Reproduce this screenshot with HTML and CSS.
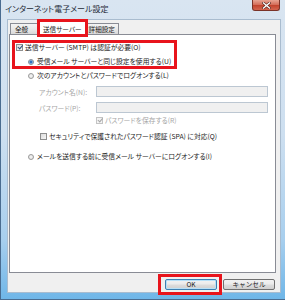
FILE: index.html
```html
<!DOCTYPE html>
<html lang="ja">

<head>
    <meta charset="utf-8">
    <link rel="stylesheet" href="styles.css">
</head>

<body>
    <div class="window">
        <div class="titlebar">
            <span class="title">インターネット電子メール設定</span>
            <div class="close-btn">
                <svg width="9" height="7" viewBox="0 0 9 7">
                    <path d="M1.5 1 L7.5 6 M7.5 1 L1.5 6" stroke="#5a2a22" stroke-width="2.6" stroke-linecap="square" />
                    <path d="M1.5 1 L7.5 6 M7.5 1 L1.5 6" stroke="#ffffff" stroke-width="1.4" stroke-linecap="square" />
                </svg>
            </div>
        </div>

        <div class="client">
            <div class="tabs">
                <div class="tab tab-first">全般</div>
                <div class="tab active">送信サーバー</div>
                <div class="tab">詳細設定</div>
            </div>

            <div class="panel">
                <div class="auth-group">
                    <div class="row row-auth">
                        <span class="checkbox checked"></span>
                        <span>送信サーバー (SMTP) は認証が必要(O)</span>
                    </div>
                    <div class="row row-same">
                        <span class="radio selected"></span>
                        <span>受信メール サーバーと同じ設定を使用する(U)</span>
                    </div>
                </div>
                <div class="row row-logon">
                    <span class="radio"></span>
                    <span>次のアカウントとパスワードでログオンする(L)</span>
                </div>
                <div class="field-row">
                    <span class="field-label">アカウント名(N):</span>
                    <div class="input"></div>
                </div>
                <div class="field-row field-row-second">
                    <span class="field-label">パスワード(P):</span>
                    <div class="input"></div>
                </div>
                <div class="row row-save disabled">
                    <span class="checkbox checked"></span>
                    <span>パスワードを保存する(R)</span>
                </div>
                <div class="row row-spa">
                    <span class="checkbox"></span>
                    <span>セキュリティで保護されたパスワード認証 (SPA) に対応(Q)</span>
                </div>
                <div class="row row-pop">
                    <span class="radio"></span>
                    <span>メールを送信する前に受信メール サーバーにログオンする(I)</span>
                </div>
            </div>

            <div class="buttons">
                <button class="btn btn-default">OK</button>
                <button class="btn">キャンセル</button>
            </div>
        </div>
    </div>
</body>

</html>
```

FILE: styles.css
```css
html,
body {
    margin: 0;
    padding: 0;
}

body {
    width: 285px;
    height: 300px;
    overflow: hidden;
    font-family: "Noto Sans CJK JP", "Noto Sans", sans-serif;
    font-feature-settings: "palt";
    color: #1c1c1c;
}

.window {
    box-sizing: border-box;
    width: 285px;
    height: 300px;
    padding: 0 4px 6px 6px;
    border-left: 1px solid #4a6c90;
    border-bottom: 1px solid #4a6c90;
    background: linear-gradient(180deg, #d9e5f1 0%, #cddff0 45%, #a8cfee 80%, #6fb6e8 100%);
}

.titlebar {
    display: flex;
    align-items: flex-start;
    height: 19px;
    margin: 0 -4px 0 -6px;
    padding-left: 4px;
}

.title {
    margin-top: 4px;
    font-size: 8px;
    line-height: 10px;
    color: #1e2a36;
}

.close-btn {
    box-sizing: border-box;
    display: flex;
    align-items: center;
    justify-content: center;
    width: 28px;
    height: 11px;
    margin-left: auto;
    margin-right: 5px;
    border: 1px solid #7a3328;
    border-top: none;
    border-radius: 0 0 3px 3px;
    background: linear-gradient(180deg, #e8a493 0%, #d5705c 45%, #c2452f 55%, #d4654f 100%);
}

.client {
    box-sizing: border-box;
    display: flex;
    flex-direction: column;
    height: 274px;
    padding: 1px 4px 0 1px;
    border: 1px solid #a9bccf;
    background: #f0f0f0;
}

/* tabs */

.tabs {
    display: flex;
    align-items: flex-end;
    height: 13px;
    padding-left: 1px;
}

.tab {
    box-sizing: border-box;
    height: 11px;
    padding: 0 3px;
    border: 1px solid #898c95;
    border-bottom: none;
    background: linear-gradient(180deg, #f4f4f4 0%, #e9e9e9 50%, #d9d9d9 100%);
    font-size: 6.6px;
    line-height: 10px;
}

.tab-first {
    min-width: 30px;
    padding-left: 4px;
}

.tab.active {
    position: relative;
    z-index: 1;
    height: 14px;
    margin-bottom: -1px;
    padding-top: 2px;
    background: #ffffff;
    outline: 3px solid #e8141c;
    outline-offset: -1px;
}

.tab + .tab {
    margin-left: -1px;
}

/* panel */

.panel {
    flex: 1;
    border: 1px solid #898c95;
    background: #ffffff;
    font-size: 6.8px;
}

.row {
    display: flex;
    align-items: center;
    height: 9px;
    line-height: 9px;
    white-space: nowrap;
}

.auth-group {
    width: 159px;
    height: 23px;
    margin: 8px 0 0 5px;
    outline: 3px solid #e8141c;
}

.row-auth {
    height: 8px;
    padding-left: 1px;
}

.row-same {
    margin-top: 6px;
    padding-left: 13px;
}

.row-logon {
    margin-top: 5px;
    padding-left: 18px;
}

.row-save {
    height: 8px;
    margin-top: 3px;
    padding-left: 86px;
}

.row-spa {
    margin-top: 8px;
    padding-left: 30px;
}

.row-pop {
    margin-top: 11px;
    padding-left: 18px;
}

.field-row {
    display: flex;
    align-items: center;
    height: 11px;
    margin-top: 6px;
    padding-left: 29px;
}

.field-row-second {
    margin-top: 5px;
}

.field-label {
    width: 57px;
    color: #a6a6a6;
    white-space: nowrap;
}

.input {
    box-sizing: border-box;
    width: 172px;
    height: 11px;
    border: 1px solid #bcc7d2;
    background: #f0f0f0;
}

/* checkbox & radio */

.checkbox {
    position: relative;
    box-sizing: border-box;
    flex-shrink: 0;
    width: 7px;
    height: 7px;
    margin-right: 2px;
    border: 1px solid #8e8f8f;
    background: linear-gradient(135deg, #dcdcdc 0%, #f6f6f6 100%);
}

.checkbox.checked::after {
    content: "";
    position: absolute;
    left: 1.5px;
    top: -0.5px;
    width: 1.5px;
    height: 3.5px;
    border-right: 1px solid #2f4f7a;
    border-bottom: 1px solid #2f4f7a;
    transform: rotate(40deg);
}

.disabled {
    color: #a6a6a6;
}

.disabled .checkbox {
    border-color: #c4c4c4;
    background: #f4f4f4;
}

.disabled .checkbox.checked::after {
    border-color: #a6a6a6;
}

.radio {
    box-sizing: border-box;
    flex-shrink: 0;
    width: 6px;
    height: 6px;
    margin-right: 3px;
    border: 1px solid #9a9a9a;
    border-radius: 50%;
    background: radial-gradient(circle, #f6f6f6 0%, #dedede 100%);
}

.radio.selected {
    border-color: #7f8a96;
    background: radial-gradient(circle, #1d5aa8 0, #3d7fcf 1.2px, #bcd6f0 2px, #eef3f8 100%);
}

/* buttons */

.buttons {
    display: flex;
    justify-content: flex-end;
    gap: 6px;
    height: 11px;
    margin: 6px 1px 2px 0;
}

.btn {
    box-sizing: border-box;
    width: 52px;
    height: 11px;
    padding: 0;
    border: 1px solid #707070;
    border-radius: 2px;
    background: linear-gradient(180deg, #f2f2f2 0%, #ebebeb 48%, #dddddd 52%, #cfcfcf 100%);
    font-family: "Noto Sans CJK JP", "Noto Sans", sans-serif;
    font-size: 6.6px;
    line-height: 9px;
    color: #1c1c1c;
}

.btn-default {
    position: relative;
    border-color: #3c7fb1;
    box-shadow: inset 0 0 0 1px #b6e0f8;
}

/* red highlight round the OK button */
.btn-default::after {
    content: "";
    position: absolute;
    top: -6px;
    right: -6px;
    bottom: -6px;
    left: -8px;
    border: 3px solid #e8141c;
}
```
